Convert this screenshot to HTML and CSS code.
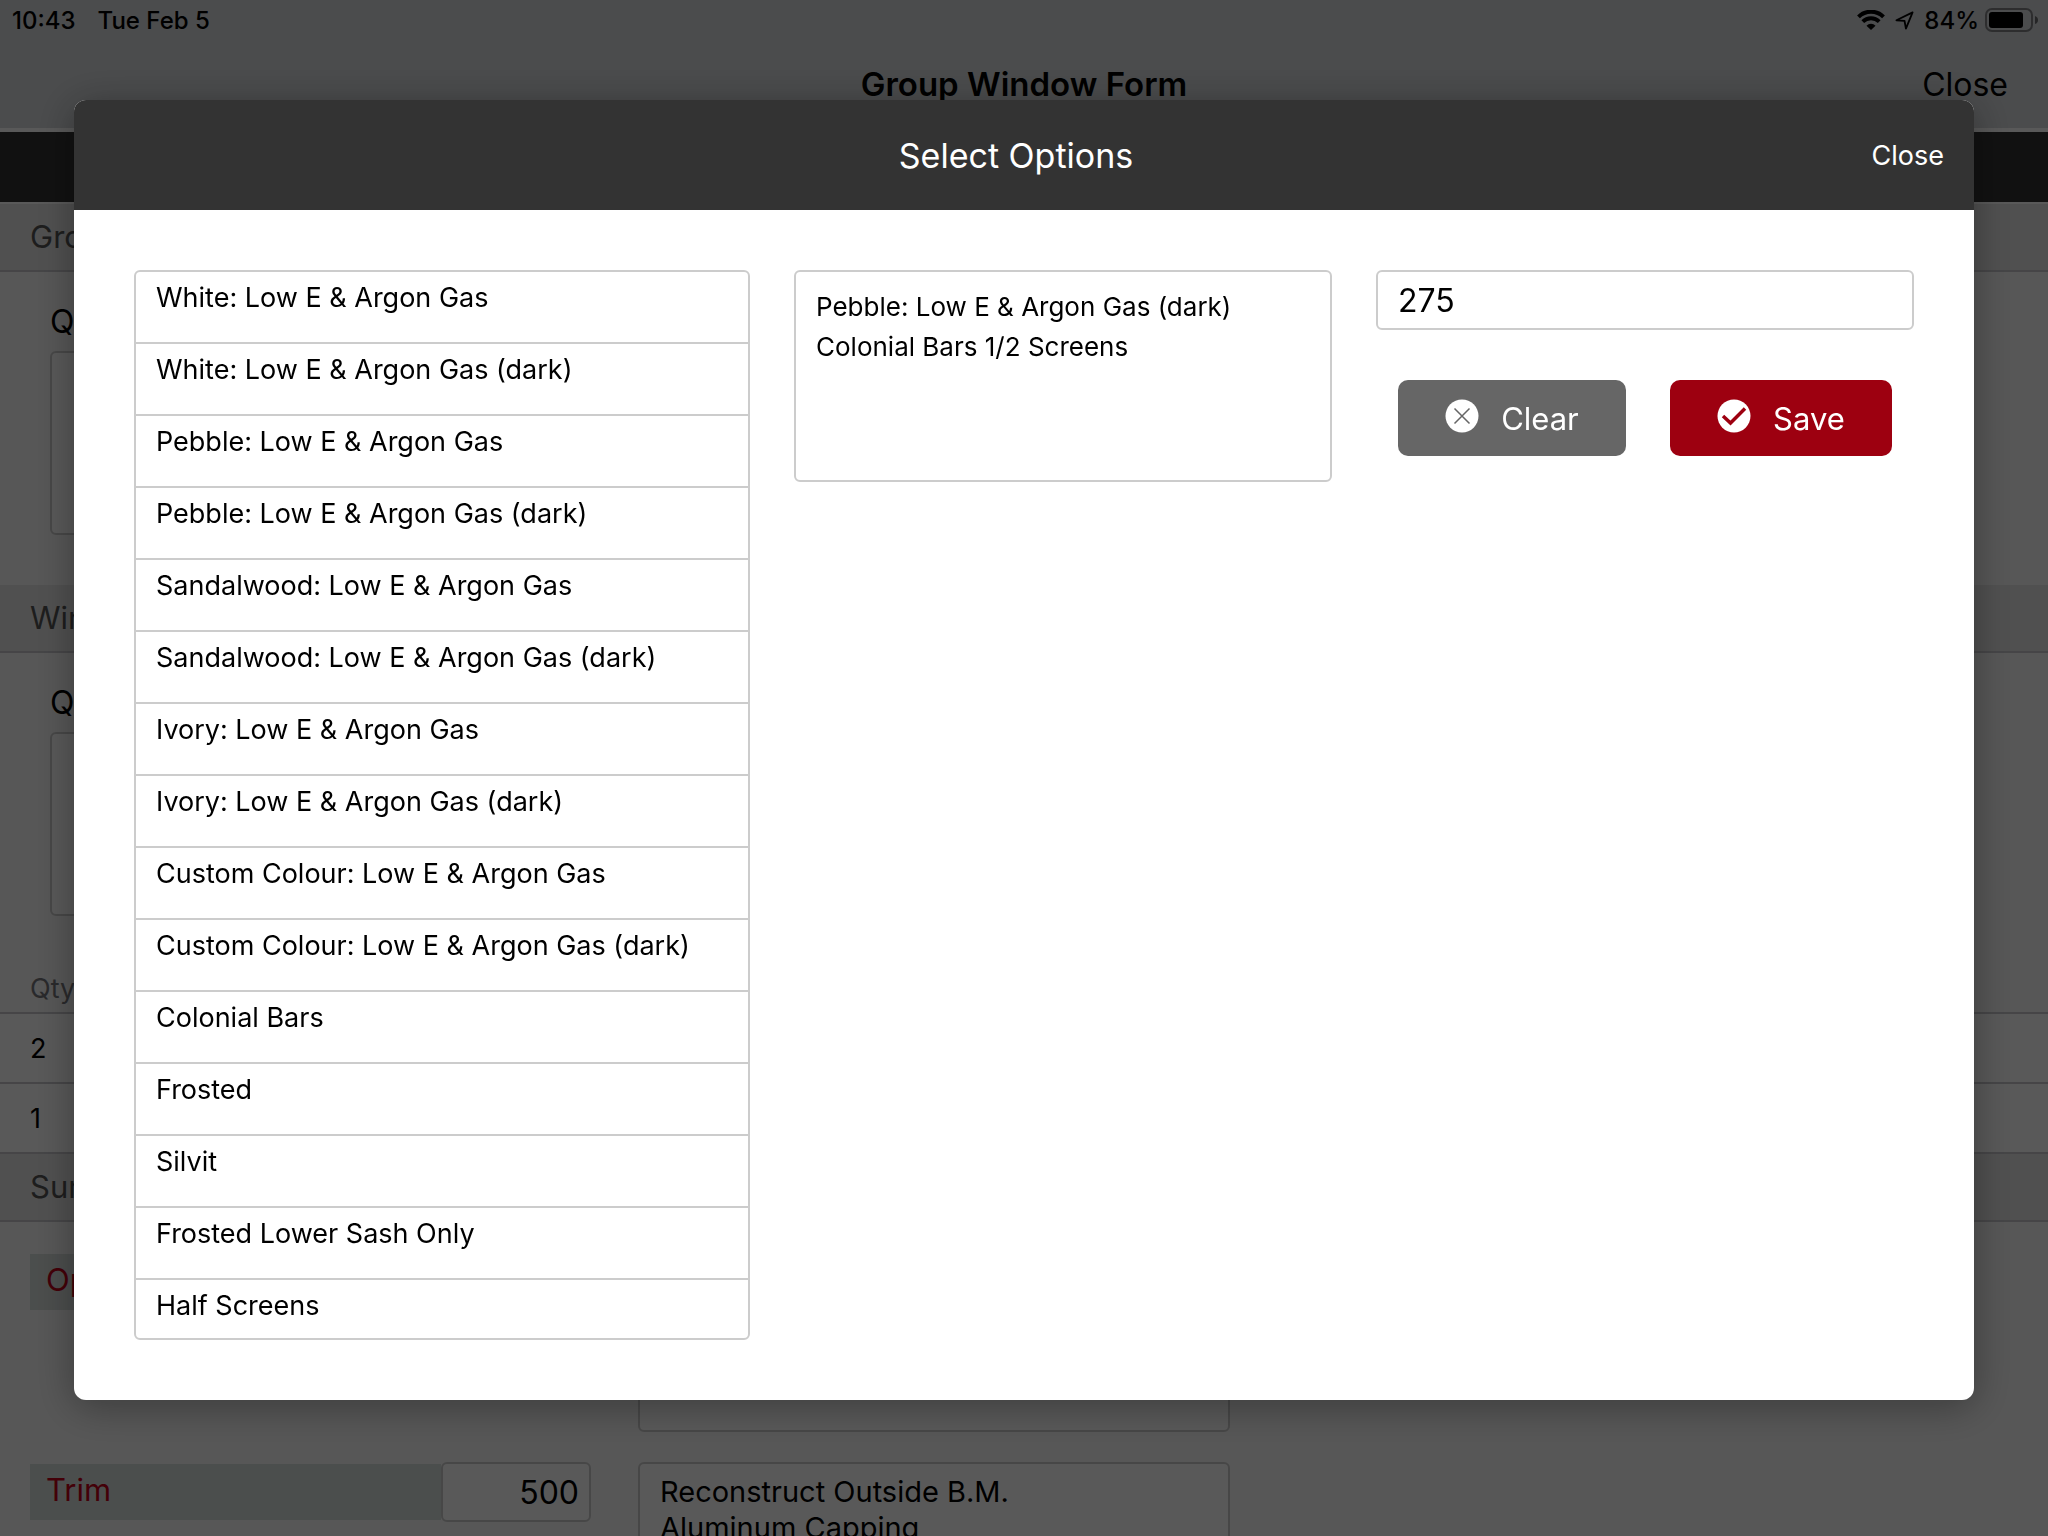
FILE: index.html
```html
<!DOCTYPE html>
<html lang="en">
<head>
<meta charset="utf-8">
<meta name="viewport" content="width=device-width, initial-scale=1">
<title>Group Window Form</title>
<link rel="stylesheet" href="styles.css">
</head>
<body>
<div class="app">
  <header class="topbar">
    <div class="status">
      <div class="status-group status-left"><span>10:43</span><span>Tue Feb 5</span></div>
      <div class="status-group status-right">
        <svg class="wifi" viewBox="0 0 28 20" aria-hidden="true">
          <path d="M1.500 6.800A17.800 17.800 0 0 1 26.500 6.800" fill="none" stroke="#000" stroke-width="4"/>
          <path d="M5.800 11.700A11.500 11.500 0 0 1 22.200 11.700" fill="none" stroke="#000" stroke-width="3.800"/>
          <path d="M14 20L9.500 15.700A6.200 6.200 0 0 1 18.500 15.700Z"/>
        </svg>
        <svg class="location" viewBox="0 0 20 20" aria-hidden="true">
          <path d="M18.500 1.500L1.500 9.800L10 10.300L11.500 18.500Z" fill="none" stroke="#000" stroke-width="1.900" stroke-linejoin="round"/>
        </svg>
        <span>84%</span>
        <svg class="battery" viewBox="0 0 53 24" aria-hidden="true">
          <rect x="1" y="1" width="46" height="22" rx="6" fill="none" stroke="#000" stroke-opacity=".4" stroke-width="2"/>
          <rect x="4" y="4" width="34" height="16" rx="3"/>
          <path d="M50 8Q53 9 53 12T50 16Z" fill-opacity=".5"/>
        </svg>
      </div>
    </div>
    <div class="navbar">
      <h1 class="nav-title">Group Window Form</h1>
      <button class="nav-close" type="button">Close</button>
    </div>
  </header>
  <div class="tabstrip"></div>
  <main class="form">
    <h2 class="section">Group</h2>
    <div class="field">
      <label for="group-quote">Quote</label>
      <textarea class="box" id="group-quote"></textarea>
    </div>
    <h2 class="section">Windows</h2>
    <div class="field">
      <label for="window-quote">Quote</label>
      <textarea class="box" id="window-quote"></textarea>
    </div>
    <table class="items">
      <thead><tr><th scope="col">Qty</th></tr></thead>
      <tbody><tr><td>2</td></tr><tr><td>1</td></tr></tbody>
    </table>
    <h2 class="section">Summary</h2>
    <div class="summary">
      <div class="summary-row">
        <div class="amount"><label for="options-amount">Options</label><input class="box" id="options-amount"></div>
        <textarea class="box" aria-label="Options notes"></textarea>
      </div>
      <div class="summary-row">
        <div class="amount"><label for="trim-amount">Trim</label><input class="box" id="trim-amount" value="500"></div>
        <textarea class="box" aria-label="Trim notes">Reconstruct Outside B.M.
Aluminum Capping</textarea>
      </div>
    </div>
  </main>
</div>

<div class="overlay">
  <div class="dialog" role="dialog" aria-modal="true" aria-labelledby="dialog-title">
    <header class="dialog-header">
      <h2 class="dialog-title" id="dialog-title">Select Options</h2>
      <button class="dialog-close" type="button">Close</button>
    </header>
    <div class="dialog-body">
      <ul class="options">
        <li>White: Low E &amp; Argon Gas</li>
        <li>White: Low E &amp; Argon Gas (dark)</li>
        <li>Pebble: Low E &amp; Argon Gas</li>
        <li>Pebble: Low E &amp; Argon Gas (dark)</li>
        <li>Sandalwood: Low E &amp; Argon Gas</li>
        <li>Sandalwood: Low E &amp; Argon Gas (dark)</li>
        <li>Ivory: Low E &amp; Argon Gas</li>
        <li>Ivory: Low E &amp; Argon Gas (dark)</li>
        <li>Custom Colour: Low E &amp; Argon Gas</li>
        <li>Custom Colour: Low E &amp; Argon Gas (dark)</li>
        <li>Colonial Bars</li>
        <li>Frosted</li>
        <li>Silvit</li>
        <li>Frosted Lower Sash Only</li>
        <li>Half Screens</li>
      </ul>
      <textarea class="box chosen" aria-label="Selected options">Pebble: Low E &amp; Argon Gas (dark)
Colonial Bars 1/2 Screens</textarea>
      <div class="side">
        <input class="box price" aria-label="Price" value="275">
        <div class="actions">
          <button class="btn btn-clear" type="button">
            <svg viewBox="0 0 34 34" aria-hidden="true"><circle cx="17" cy="17" r="16.500" fill="#fff"/><path d="M9.500 9.500L24.500 24.500M24.500 9.500L9.500 24.500" stroke="#666" stroke-width="1.500"/></svg>
            <span>Clear</span>
          </button>
          <button class="btn btn-save" type="button">
            <svg viewBox="0 0 34 34" aria-hidden="true"><circle cx="17" cy="17" r="16.500" fill="#fff"/><path d="M6 17L13.500 24L28 9.500" fill="none" stroke="#9d0010" stroke-width="3.500"/></svg>
            <span>Save</span>
          </button>
        </div>
      </div>
    </div>
  </div>
</div>
</body>
</html>
```
FILE: styles.css
```css
* { box-sizing: border-box; }

body {
  margin: 0;
  font-family: Inter, "Liberation Sans", sans-serif;
  font-size: 27px;
  color: #000;
  background: #f9f9f9;
}

h1, h2, ul { margin: 0; padding: 0; }

button, input, textarea {
  font: inherit;
  color: inherit;
  margin: 0;
}

button { border: 0; padding: 0; background: none; }

.box {
  display: block;
  border: 2px solid #ccc;
  border-radius: 6px;
  background: #fff;
  outline: 0;
  resize: none;
  overflow: hidden;
}

/* Form behind the dialog */
.app { height: 100vh; overflow: hidden; }

.topbar {
  height: 132px;
  background: #d6d9dc;
  border-bottom: 4px solid #fff;
}

.status {
  display: flex;
  justify-content: space-between;
  height: 40px;
  padding: 0 10px 0 12px;
  font-size: 24px;
  font-weight: 500;
}

.status-group { display: flex; align-items: center; }
.status-left { gap: 22px; }
.status-right { gap: 6px; }
.wifi { width: 28px; height: 20px; margin-right: 4px; }
.location { width: 19px; height: 19px; margin-right: 4px; }
.battery { width: 53px; height: 24px; }

.navbar {
  display: grid;
  grid-template-columns: 1fr auto 1fr;
  align-items: center;
  height: 88px;
  padding: 0 40px;
}

.nav-title { grid-column: 2; font-size: 33px; font-weight: 600; }
.nav-close { justify-self: end; font-size: 32px; }

.tabstrip { height: 72px; background: #333; border-bottom: 2px solid #fff; }

.section {
  height: 68px;
  padding: 0 30px;
  border-bottom: 2px solid #c8c7cc;
  background: #e6e6e6;
  color: #555;
  font-size: 31px;
  font-weight: 400;
  line-height: 66px;
}

.field { height: 313px; padding: 30px 50px 0; font-size: 32px; line-height: 40px; }
.field label { display: block; margin-bottom: 9px; }
.field .box { width: 50%; height: 184px; background: #fff; }

.items { width: 100%; border-collapse: collapse; text-align: left; }
.items th, .items td { height: 70px; padding: 0 30px; border-bottom: 2px solid #c8c7cc; }
.items th { height: 47px; font-weight: 400; color: #77777c; line-height: 34px; }
.items td { background: #fff; }

.summary { display: grid; gap: 30px; padding: 30px; }

.summary-row {
  display: grid;
  grid-template-columns: 561px 592px;
  gap: 47px;
  align-items: start;
}

.summary-row textarea { height: 180px; padding: 10px 20px; font-size: 29px; line-height: 36px; }
.amount { display: flex; align-items: center; }

.amount label {
  flex: 1;
  height: 56px;
  padding: 0 16px;
  background: #d8dedc;
  color: #c00018;
  font-size: 31px;
  line-height: 52px;
}

.amount .box { width: 150px; height: 60px; padding: 0 10px; font-size: 32px; text-align: right; }

/* Dialog */
.overlay {
  position: fixed;
  inset: 0;
  padding: 100px 74px;
  background: rgba(0, 0, 0, .65);
}

.dialog {
  overflow: hidden;
  border-radius: 12px;
  background: #fff;
  box-shadow: 0 6px 40px rgba(0, 0, 0, .35);
}

.dialog-header {
  display: grid;
  grid-template-columns: 1fr auto 1fr;
  align-items: center;
  height: 110px;
  padding: 0 30px 0 14px;
  background: #333;
  color: #fff;
}

.dialog-title { grid-column: 2; font-size: 34px; font-weight: 400; }
.dialog-close { justify-self: end; }

.dialog-body {
  display: grid;
  grid-template-columns: 616fr 538fr 538fr;
  gap: 44px;
  align-items: start;
  padding: 60px;
}

.options {
  height: 1070px;
  border: 2px solid #ccc;
  border-radius: 6px;
  overflow: hidden;
  list-style: none;
}

.options li {
  height: 72px;
  padding: 8px 20px;
  border-bottom: 2px solid #ccc;
  line-height: 36px;
}

.chosen { width: 100%; height: 212px; padding: 15px 20px; font-size: 26px; line-height: 40px; }
.price { width: 100%; height: 60px; padding: 0 20px; font-size: 32px; }
.actions { display: flex; gap: 44px; padding: 50px 22px; }

.btn {
  display: flex;
  flex: 1 1 auto;
  align-items: center;
  justify-content: center;
  gap: 22px;
  height: 76px;
  border-radius: 10px;
  color: #fff;
  font-size: 31px;
}

.btn svg { width: 34px; height: 34px; margin-bottom: 4px; }
.btn-clear { background: #666; }
.btn-save { background: #9d0010; }
```
